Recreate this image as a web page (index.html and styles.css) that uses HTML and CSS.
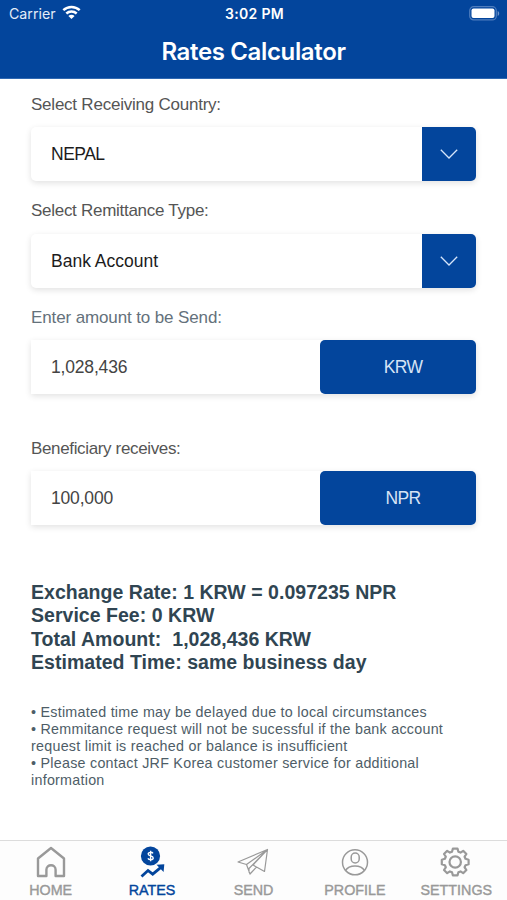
FILE: index.html
```html
<!DOCTYPE html>
<html lang="en">
<head>
<meta charset="utf-8">
<title>Rates Calculator</title>
<link rel="stylesheet" href="styles.css">
</head>
<body>
<div class="app">
  <header class="header">
    <div class="status">
      <div class="carrier"><span>Carrier</span>
        <svg width="19" height="15" viewBox="0 0 19 15" fill="none" stroke="#fff" stroke-width="2.5"><path d="M1.3 5.2C6 .9 13 .9 17.7 5.2M4.3 8.5c3-2.7 7.400-2.700 10.400 0"/><path d="M9.500 14 6.400 10.900c1.800-1.500 4.400-1.500 6.200 0z" fill="#fff" stroke="none"/></svg>
      </div>
      <span class="time">3:02 PM</span>
      <svg class="battery" width="31" height="15" viewBox="0 0 31 15"><rect x=".7" y=".7" width="26.600" height="13.200" rx="4" fill="none" stroke="#4f7dbd" stroke-width="1.200"/><rect x="2.500" y="2.600" width="23" height="9.500" rx="2" fill="#fff"/><path d="M28.700 5v5c2-.8 2-4.200 0-5z" fill="#6f94c9"/></svg>
    </div>
    <h1 class="title">Rates Calculator</h1>
  </header>
  <main class="content">
    <div class="label l-country">Select Receiving Country:</div>
    <div class="field select"><span class="value v-nepal">NEPAL</span><span class="drop"><svg width="18" height="10" viewBox="0 0 18 10"><path d="M.8.8 9 9 17.200.8"/></svg></span></div>
    <div class="label l-type">Select Remittance Type:</div>
    <div class="field select"><span class="value v-bank">Bank Account</span><span class="drop"><svg width="18" height="10" viewBox="0 0 18 10"><path d="M.8.8 9 9 17.200.8"/></svg></span></div>
    <div class="label l-amount">Enter amount to be Send:</div>
    <div class="field square"><span class="value amount">1,028,436</span><span class="currency">KRW</span></div>
    <div class="label l-receive">Beneficiary receives:</div>
    <div class="field square"><span class="value amount">100,000</span><span class="currency">NPR</span></div>
    <div class="summary">
      <div class="s-rate">Exchange Rate: 1 KRW = 0.097235 NPR</div>
      <div class="s-fee">Service Fee: 0 KRW</div>
      <div class="s-total">Total Amount:&nbsp; 1,028,436 KRW</div>
      <div class="s-time">Estimated Time: same business day</div>
    </div>
    <div class="notes">
      <div>• Estimated time may be delayed due to local circumstances</div>
      <div>• Remmitance request will not be sucessful if the bank account<br>request limit is reached or balance is insufficient</div>
      <div>• Please contact JRF Korea customer service for additional<br>information</div>
    </div>
  </main>
  <nav class="tabs">
    <div class="tab"><svg width="34" height="34" viewBox="0 0 34 34" stroke-width="2.400"><path d="M4 13.500 17 3l13 10.500V31h-8.400v-6.300c0-6-9.200-6-9.200 0V31H4z" stroke-linejoin="round"/></svg><span>HOME</span></div>
    <div class="tab active"><svg width="34" height="34" viewBox="0 0 34 34"><circle cx="15.500" cy="11" r="9.600" fill="#03459c" stroke="none"/><path d="M18 8.300c-.8-1.300-4.800-1.500-4.800.6 0 2.600 5 1.300 5 4 0 2.300-4.300 2.200-5.300.5M15.600 5.700v10.600" stroke="#fff" stroke-width="1.400"/><path d="m6.500 31.500 6.500-6 4.700 3.700 8.500-7" stroke-width="2.800"/><path d="M21.500 19.800 29.300 19.300 28.600 27z" fill="#03459c" stroke="none"/></svg><span>RATES</span></div>
    <div class="tab"><svg width="34" height="34" viewBox="0 0 34 34" stroke-width="1.200" stroke-linejoin="round"><path d="M2 17 31.500 4.500 28.500 26.500l-8-4.500-6.500 7-3.500-9.500zM10.500 19.500 31.500 4.500 13 23.500v4M31.500 4.500l-14.500 15.500 3.500 2"/></svg><span>SEND</span></div>
    <div class="tab"><svg width="34" height="34" viewBox="0 0 34 34" stroke-width="1.500"><circle cx="17" cy="17.300" r="12.500"/><rect x="13.200" y="8" width="8" height="10" rx="4"/><path d="M7.500 25.600c3.500-6.300 15.500-6.300 19 0"/></svg><span>PROFILE</span></div>
    <div class="tab"><svg width="34" height="34" viewBox="0 0 34 34" stroke-width="2.200" stroke-linejoin="round"><g transform="translate(16.200 17)"><path d="M-2.300-13.400h4.600L3.200-10.300 5.300-9.400 8-11.200 11.200-8 9.400-5.300 10.300-3.200 13.400-2.300v4.600L10.300 3.200 9.400 5.300 11.200 8 8 11.200 5.300 9.400 3.200 10.300 2.300 13.400h-4.600L-3.200 10.300-5.300 9.400-8 11.200-11.200 8-9.400 5.300-10.300 3.200-13.400 2.300v-4.600L-10.300-3.200-9.400-5.300-11.200-8-8-11.200-5.300-9.400-3.200-10.300z"/><circle r="5.700"/></g></svg><span>SETTINGS</span></div>
  </nav>
</div>
</body>
</html>
```
FILE: styles.css
```css
* { box-sizing: border-box; }
body { margin: 0; background: #fff; font-family: "Liberation Sans", Arial, sans-serif; }
.app { width: 507px; height: 900px; display: flex; flex-direction: column; overflow: hidden; }
.header { height: 79px; flex: none; background: #03459c; color: #fff; font-family: Inter, sans-serif; border-bottom: 1px solid #2f68b2; }
.status { height: 27px; display: grid; grid-template-columns: 1fr auto 1fr; align-items: center; padding: 0 7px 0 9px; font-size: 14.200px; }
.carrier { display: flex; align-items: center; gap: 6px; color: #e4edf8; }
.carrier svg { margin-top: -2px; }
.time { font-weight: 600; font-size: 14px; letter-spacing: .35px; }
.battery { justify-self: end; }
.title { margin: 10px 0 0; font-size: 24px; line-height: 30px; font-weight: 600; text-align: center; letter-spacing: -.35px; }
.content { flex: 1; padding: 16px 31px 0; }
.label { height: 20px; line-height: 20px; font-size: 17px; color: #555; margin: 20px 0 12.500px; white-space: nowrap; letter-spacing: -.28px; }
.l-country { margin-top: 0; margin-bottom: 12px; letter-spacing: -.23px; }
.l-amount { color: #64717b; letter-spacing: -.12px; }
.l-receive { margin-top: 44.500px; letter-spacing: -.35px; }
.field { width: 445px; height: 54px; display: flex; align-items: center; justify-content: space-between; border-radius: 5px; box-shadow: 0 2px 6px rgba(0,0,0,.12); background: #fff; }
.square { border-radius: 0 5px 5px 0; }
.value { padding-left: 20px; padding-top: 1px; font-size: 17.500px; color: #1c1c1c; }
.v-nepal { letter-spacing: -.5px; }
.amount { color: #444; letter-spacing: -.18px; }
.drop { width: 54px; height: 54px; background: #03459c; border-radius: 0 5px 5px 0; display: flex; align-items: center; justify-content: center; }
.drop path { fill: none; stroke: #d6e5fa; stroke-width: 1.300px; }
.currency { width: 156px; height: 54px; background: #03459c; border-radius: 5px; color: #d6e3f5; font-size: 17.500px; line-height: 55px; text-align: center; padding-left: 10px; letter-spacing: -.7px; }
.summary { margin-top: 55.500px; font-size: 19.500px; line-height: 23.600px; font-weight: 700; color: #304552; white-space: nowrap; letter-spacing: .03px; }
.notes { margin-top: 29px; font-size: 14.300px; line-height: 17px; color: #4e5d67; white-space: nowrap; letter-spacing: .26px; }
.tabs { height: 60px; flex: none; border-top: 1px solid #dcdcdc; display: grid; grid-template-columns: repeat(5, 1fr); background: #fdfdfd; }
.tab { display: flex; flex-direction: column; align-items: center; padding-top: 4px; color: #999; font-size: 14.300px; line-height: 20px; -webkit-text-stroke: .4px; }
.tab svg { fill: none; stroke: currentColor; flex: none; }
.tab span { margin-top: 1px; }
.active { color: #03459c; }
```
